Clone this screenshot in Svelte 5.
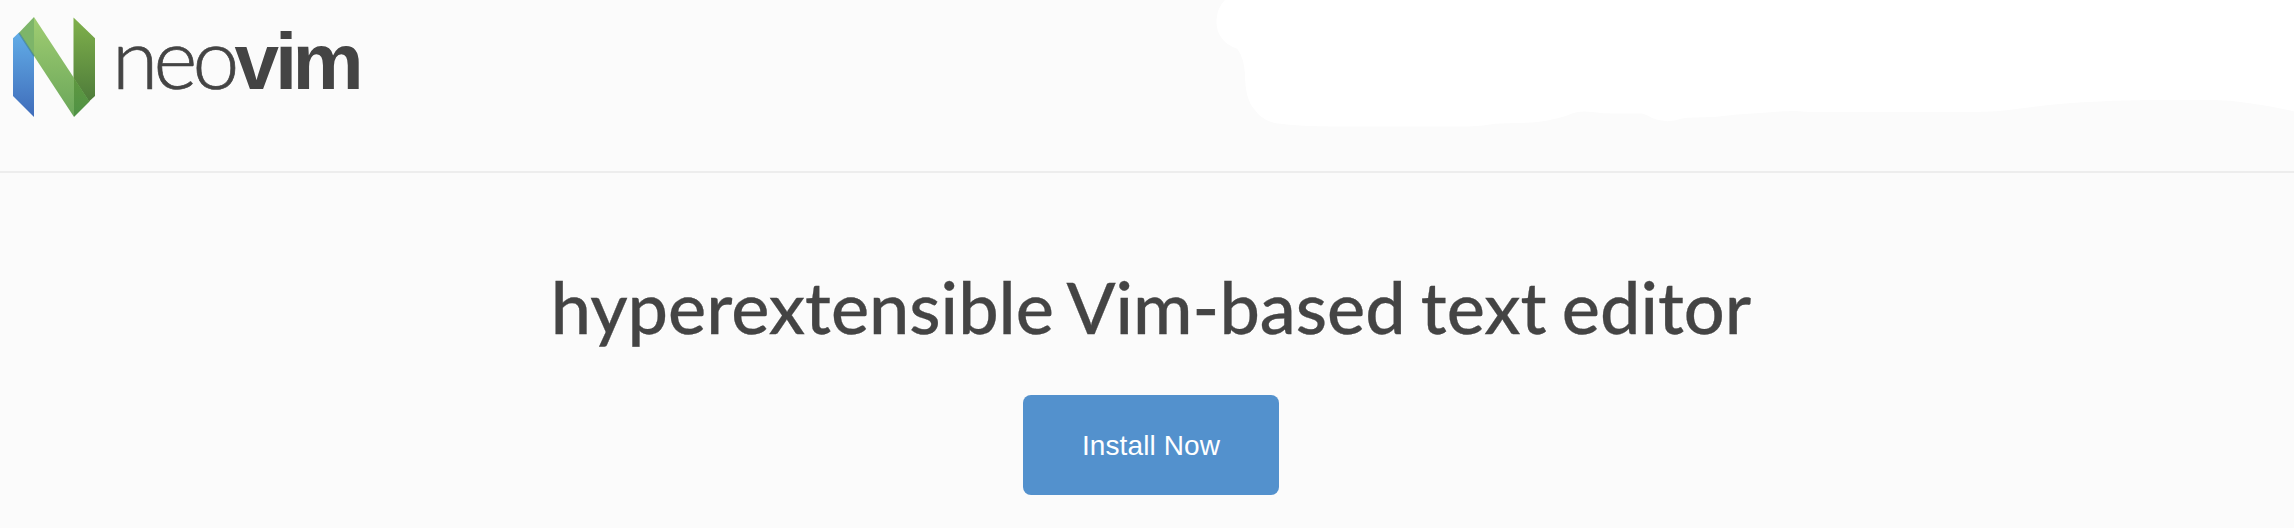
<script>
  const title = 'hyperextensible Vim-based text editor';
</script>

<div class="page">
  <header>
    <svg class="brand" width="380" height="130" viewBox="0 0 380 130" role="img" aria-label="neovim">
      <defs>
        <linearGradient id="blue" x1="0" y1="0" x2="0" y2="1">
          <stop offset="0" stop-color="#62ade7" />
          <stop offset="1" stop-color="#3f6cba" />
        </linearGradient>
        <linearGradient id="right" x1="0" y1="0" x2="0" y2="1">
          <stop offset="0" stop-color="#80b14c" />
          <stop offset="1" stop-color="#4e7c3a" />
        </linearGradient>
        <linearGradient id="band" x1="0" y1="0" x2="0" y2="1">
          <stop offset="0" stop-color="#a0cd72" />
          <stop offset="1" stop-color="#6aa659" />
        </linearGradient>
        <linearGradient id="fold" x1="0" y1="0" x2="0" y2="1">
          <stop offset="0" stop-color="#5f983f" />
          <stop offset="1" stop-color="#4f9246" />
        </linearGradient>
      </defs>
      <path d="M13 38.3 19 32.5 34 55V117L13 96Z" fill="url(#blue)" />
      <path d="M73.5 17.5 95 38.3V96L89 101.5 73.5 78Z" fill="url(#right)" />
      <path d="M34 17 74 78V117L34 56Z" fill="url(#band)" />
      <path d="M34 17V56L19 32.8Z" fill="#7db569" />
      <path d="M74 78 89.5 101.5 74 117Z" fill="url(#fold)" />
      <path d="M19 33 34 56" fill="none" stroke="#397a8e" stroke-opacity=".55" stroke-width="1.5" />
      <text class="neo" x="112 153.500 192.500" y="89">neo</text>
      <text class="vim" x="234.500 275 292.5" y="88.7">vim</text>
    </svg>
    <svg class="cloud" width="1080" height="130" viewBox="1214 0 1080 130" aria-hidden="true">
      <path
        fill="#fff"
        d="M1225 0Q1217 8 1216.5 20Q1216 30 1221 37Q1226 45 1237.5 49Q1244 58 1245 74Q1245 100 1255 110Q1262 121 1278 123.500Q1300 126.500 1335 126.500H1461Q1477 126.500 1490 124.500Q1500 123 1515 123Q1538 123 1552 119.500Q1564 117 1572 113.500Q1580 110.500 1592 112Q1604 113.500 1615 113.500H1641Q1646 114 1652 118Q1666 124 1682 118.500Q1692 117 1714 117Q1737 114 1760 113Q1780 111 1796 111Q1805 112 1815 112H1970Q1999 112 2020 108.500Q2058 103 2100 101.500Q2127 100 2150 100H2213Q2230 100 2248 103Q2278 107 2294 111.500V0Z"
      />
    </svg>
  </header>
  <main>
    <h1>{title}</h1>
    <button><span>Install Now</span></button>
  </main>
</div>

<style>
  :global(body) {
    margin: 0;
    background: #fbfbfb;
  }
  .page {
    height: 528px;
    overflow: hidden;
    background: #fbfbfb;
    color: #444;
  }
  header {
    box-sizing: border-box;
    height: 173px;
    border-bottom: 2px solid #ededed;
    display: flex;
    justify-content: space-between;
    align-items: flex-start;
  }
  svg {
    display: block;
  }
  .neo {
    font: 300 84px Lato, sans-serif;
    fill: #444;
    stroke: #444;
    stroke-width: 0.7px;
  }
  .vim {
    font: 700 80px 'Liberation Sans', Arial, sans-serif;
    fill: #444;
  }
  main {
    display: flex;
    flex-direction: column;
    align-items: center;
    padding: 88px 0 0 8px;
  }
  h1 {
    margin: 0 0 44px;
    font: 500 72px/90px Lato, sans-serif;
    word-spacing: -3px;
    white-space: nowrap;
    -webkit-text-stroke: 0.3px #444;
  }
  button {
    width: 256px;
    height: 100px;
    padding: 2px 0 0;
    border: 0;
    border-radius: 8px;
    background: #5391cd;
    color: #fff;
    font: 28px 'Liberation Sans', Arial, sans-serif;
    letter-spacing: 0.1px;
  }
</style>
